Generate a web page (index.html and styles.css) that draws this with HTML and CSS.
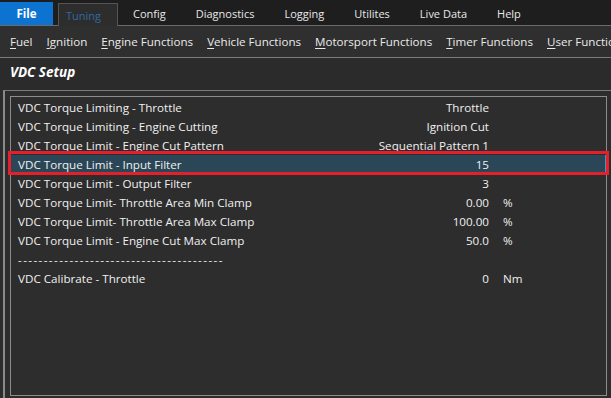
FILE: index.html
```html
<!DOCTYPE html>
<html lang="en">
<head>
<meta charset="UTF-8">
<meta name="viewport" content="width=device-width, initial-scale=1.0">
<title>VDC Setup</title>
<link rel="stylesheet" href="styles.css">
</head>
<body>
<div class="app">
  <div class="tabs">
    <div class="tab file">File</div>
    <div class="tab active">Tuning</div>
    <div class="tab">Config</div>
    <div class="tab">Diagnostics</div>
    <div class="tab">Logging</div>
    <div class="tab">Utilites</div>
    <div class="tab">Live Data</div>
    <div class="tab">Help</div>
  </div>
  <div class="menu">
    <span><u>F</u>uel</span>
    <span><u>I</u>gnition</span>
    <span><u>E</u>ngine Functions</span>
    <span><u>V</u>ehicle Functions</span>
    <span><u>M</u>otorsport Functions</span>
    <span><u>T</u>imer Functions</span>
    <span><u>U</u>ser Functions</span>
  </div>
  <div class="title">VDC Setup</div>
  <div class="panel">
    <div class="list">
      <div class="row"><span class="label">VDC Torque Limiting - Throttle</span><span class="value">Throttle</span><span class="unit"></span></div>
      <div class="row"><span class="label">VDC Torque Limiting - Engine Cutting</span><span class="value">Ignition Cut</span><span class="unit"></span></div>
      <div class="row"><span class="label">VDC Torque Limit - Engine Cut Pattern</span><span class="value">Sequential Pattern 1</span><span class="unit"></span></div>
      <div class="row selected"><span class="label">VDC Torque Limit - Input Filter</span><span class="value">15</span><span class="unit"></span></div>
      <div class="row"><span class="label">VDC Torque Limit - Output Filter</span><span class="value">3</span><span class="unit"></span></div>
      <div class="row"><span class="label">VDC Torque Limit- Throttle Area Min Clamp</span><span class="value">0.00</span><span class="unit">%</span></div>
      <div class="row"><span class="label">VDC Torque Limit- Throttle Area Max Clamp</span><span class="value">100.00</span><span class="unit">%</span></div>
      <div class="row"><span class="label">VDC Torque Limit - Engine Cut Max Clamp</span><span class="value">50.0</span><span class="unit">%</span></div>
      <div class="row"><span class="label dashes">----------------------------------------</span><span class="value"></span><span class="unit"></span></div>
      <div class="row"><span class="label">VDC Calibrate - Throttle</span><span class="value">0</span><span class="unit">Nm</span></div>
    </div>
    <div class="marker"></div>
  </div>
</div>
</body>
</html>
```

FILE: styles.css
```css
body {
  margin: 0;
  background-color: #2d2d2d;
  font-family: "Open Sans", "Noto Sans", sans-serif;
  color: #f0f0f0;
  overflow: hidden;
}
.app {
  width: 611px;
  height: 398px;
  display: flex;
  flex-direction: column;
  overflow: hidden;
}
.tabs {
  height: 25px;
  background-color: #1e1e1e;
  border-bottom: 1px solid #6a6a6a;
  display: flex;
  align-items: flex-end;
  font-size: 11px;
}
.tab {
  height: 23px;
  line-height: 24px;
  padding: 0 15px;
  color: #e8e8e8;
}
.tab.file {
  width: 53px;
  padding: 0;
  text-align: center;
  background-color: #0c74d0;
  font-weight: bold;
  font-size: 11.5px;
  color: #fff;
}
.tab.active {
  margin-left: 5px;
  height: 22px;
  padding: 0 0 0 7px;
  width: 51px;
  background-color: #2d2d2d;
  border: 1px solid #555;
  border-bottom: none;
  color: #2f6aa2;
  margin-bottom: -1px;
}
.menu {
  height: 31px;
  background-color: #2f2f2f;
  border-bottom: 1px solid #7a7a7a;
  display: flex;
  align-items: center;
  gap: 14px;
  padding-left: 10px;
  font-size: 11.6px;
  white-space: nowrap;
  color: #eaeaea;
}
.menu u {
  text-underline-offset: 2px;
}
.title {
  height: 32px;
  line-height: 28px;
  padding-left: 10px;
  font-size: 13.5px;
  font-weight: bold;
  font-style: italic;
  color: #fff;
  background-color: #2b2b2b;
}
.panel {
  flex: 1;
  position: relative;
  margin-left: 3px;
  border-top: 1px solid #7a7a7a;
  border-left: 2px solid #8a8a8a;
  padding: 5px 4px 2px 5px;
  display: flex;
}
.list {
  flex: 1;
  border: 1px solid #8c8c8c;
  padding-top: 1px;
  font-size: 11.65px;
}
.row {
  height: 19px;
  line-height: 19px;
  display: grid;
  grid-template-columns: 1fr 160px 103px;
  column-gap: 14px;
  padding-left: 7px;
  white-space: nowrap;
}
.row.selected {
  background-color: #2b4757;
  box-shadow: inset -1px 0 0 #4a90c0;
}
.value {
  text-align: right;
}
.dashes {
  letter-spacing: 1.4px;
}
.marker {
  position: absolute;
  left: 3px;
  top: 60px;
  width: 595px;
  height: 18px;
  border: 3px solid #e3202b;
}
```
